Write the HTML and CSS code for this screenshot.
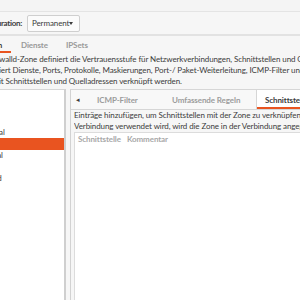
FILE: index.html
```html
<!DOCTYPE html>
<html lang="de">
<head>
<meta charset="utf-8">
<link rel="stylesheet" href="styles.css">
</head>
<body>
<div class="topbar"></div>
<div class="toolbar">
  <span class="cfg-label">Konfiguration:</span>
  <span class="combo"><span>Permanent</span><span class="caret"></span></span>
</div>
<div class="tabs">
  <span class="tab tab-zones">Zonen</span>
  <span class="tab tab-services">Dienste</span>
  <span class="tab">IPSets</span>
</div>
<div class="desc">
  <div class="line">walld-Zone definiert die Vertrauensstufe für Netzwerkverbindungen, Schnittstellen und Quelladressen</div>
  <div class="line">iert Dienste, Ports, Protokolle, Maskierungen, Port-/ Paket-Weiterleitung, ICMP-Filter und Rich-Rules</div>
  <div class="line">it Schnittstellen und Quelladressen verknüpft werden.</div>
</div>
<div class="main">
  <div class="zones">
    <div class="zone-list">
      <div class="zone">block</div>
      <div class="zone">dmz</div>
      <div class="zone">drop</div>
      <div class="zone">external</div>
      <div class="zone selected">home</div>
      <div class="zone">internal</div>
      <div class="zone">public</div>
      <div class="zone">trusted</div>
      <div class="zone">work</div>
    </div>
  </div>
  <div class="notebook">
    <div class="nb-head">
      <span class="arrow">&#9666;</span>
      <span class="nb-tab nb-icmp">ICMP-Filter</span>
      <span class="nb-tab nb-rich">Umfassende Regeln</span>
      <span class="nb-tab nb-active">Schnittstellen</span>
    </div>
    <div class="nb-body">
      <div class="nb-text">
        <div class="line">Einträge hinzufügen, um Schnittstellen mit der Zone zu verknüpfen. Wenn die Schnittstelle von einer</div>
        <div class="line">Verbindung verwendet wird, wird die Zone in der Verbindung angegeben.</div>
      </div>
      <div class="tree">
        <div class="tree-head">
          <span class="col col-if">Schnittstelle</span>
          <span class="col">Kommentar</span>
        </div>
      </div>
    </div>
  </div>
</div>
</body>
</html>
```
FILE: styles.css
```css
html, body {
  margin: 0;
  padding: 0;
  width: 300px;
  height: 300px;
  overflow: hidden;
  background: #f6f6f6;
  font-family: "Lato", "Noto Sans", sans-serif;
  font-size: 8px;
  letter-spacing: -0.1px;
  color: #3c3c3c;
}
.topbar {
  height: 11px;
  background: #f4f4f4;
  border-bottom: 1px solid #e4e4e4;
}
.toolbar {
  height: 22px;
  display: flex;
  align-items: center;
  border-bottom: 2px solid #e2e2e2;
  white-space: nowrap;
  overflow: hidden;
}
.cfg-label {
  font-weight: bold;
  flex: none;
  width: 58px;
  margin-left: -36px;
  text-align: right;
  letter-spacing: -0.3px;
}
.combo {
  flex: none;
  margin-left: 5px;
  height: 17px;
  width: 53px;
  box-sizing: border-box;
  border: 1px solid #cfcfcf;
  border-radius: 2px;
  background: #fbfbfb;
  display: flex;
  align-items: center;
  justify-content: space-between;
  padding: 0 6px 0 4px;
}
.caret {
  width: 0;
  height: 0;
  border-left: 2.5px solid transparent;
  border-right: 2.5px solid transparent;
  border-top: 3px solid #3c3c3c;
}
.tabs {
  height: 17px;
  display: flex;
  align-items: stretch;
  white-space: nowrap;
  font-weight: bold;
  color: #9a9a9a;
  overflow: hidden;
}
.tab {
  flex: none;
  display: flex;
  align-items: center;
}
.tab-zones {
  color: #3c3c3c;
  width: 31px;
  margin-left: -20px;
  box-sizing: border-box;
  box-shadow: inset 0 -2px 0 #e95420;
}
.tab-services {
  margin-left: 10px;
  width: 45px;
}
.desc {
  padding-top: 1px;
  height: 35px;
  white-space: nowrap;
  overflow: hidden;
}
.line {
  height: 11px;
  line-height: 11px;
  margin-left: -1px;
}
.main {
  display: flex;
  height: 212px;
  gap: 4px;
}
.zones {
  width: 66px;
  flex: none;
  box-sizing: border-box;
  background: #fff;
  border-top: 1px solid #d6d6d6;
  border-right: 2px solid #cfcfcf;
  overflow: hidden;
}
.zone-list {
  margin-top: 2px;
}
.zone {
  height: 11.5px;
  line-height: 11.5px;
  white-space: nowrap;
  text-indent: -23px;
}
.zone.selected {
  background: #e95420;
  color: #fff;
}
.notebook {
  flex: 1;
  border-left: 1px solid #d2d2d2;
  border-top: 1px solid #d6d6d6;
  background: #f6f6f6;
  display: flex;
  flex-direction: column;
  min-width: 0;
  overflow: hidden;
}
.nb-head {
  height: 19px;
  flex: none;
  display: flex;
  align-items: stretch;
  border-bottom: 1px solid #d6d6d6;
  white-space: nowrap;
  font-weight: bold;
  color: #9c9c9c;
  background: #f8f8f8;
}
.arrow {
  flex: none;
  color: #3c3c3c;
  width: 21px;
  padding-left: 5px;
  display: flex;
  align-items: center;
  font-size: 7px;
  font-weight: normal;
}
.nb-tab {
  flex: none;
  display: flex;
  align-items: center;
}
.nb-icmp { width: 75px; }
.nb-rich { width: 84px; }
.nb-active {
  background: #fff;
  color: #3c3c3c;
  border-left: 1px solid #d6d6d6;
  padding-left: 8px;
  box-shadow: inset 0 -2px 0 #e95420;
}
.nb-body {
  flex: 1;
  padding: 0 0 0 3px;
  display: flex;
  flex-direction: column;
  min-height: 0;
}
.nb-text {
  white-space: nowrap;
  overflow: hidden;
}
.nb-text .line { margin-left: 0; }
.tree {
  margin-top: 0;
  flex: 1;
  background: #fff;
  border: 1px solid #dcdcdc;
  border-right: 0;
}
.tree-head {
  height: 11px;
  display: flex;
  align-items: center;
  font-weight: bold;
  color: #a8a8a8;
  white-space: nowrap;
  padding-left: 3px;
}
.col-if { margin-right: 6px; }
```
